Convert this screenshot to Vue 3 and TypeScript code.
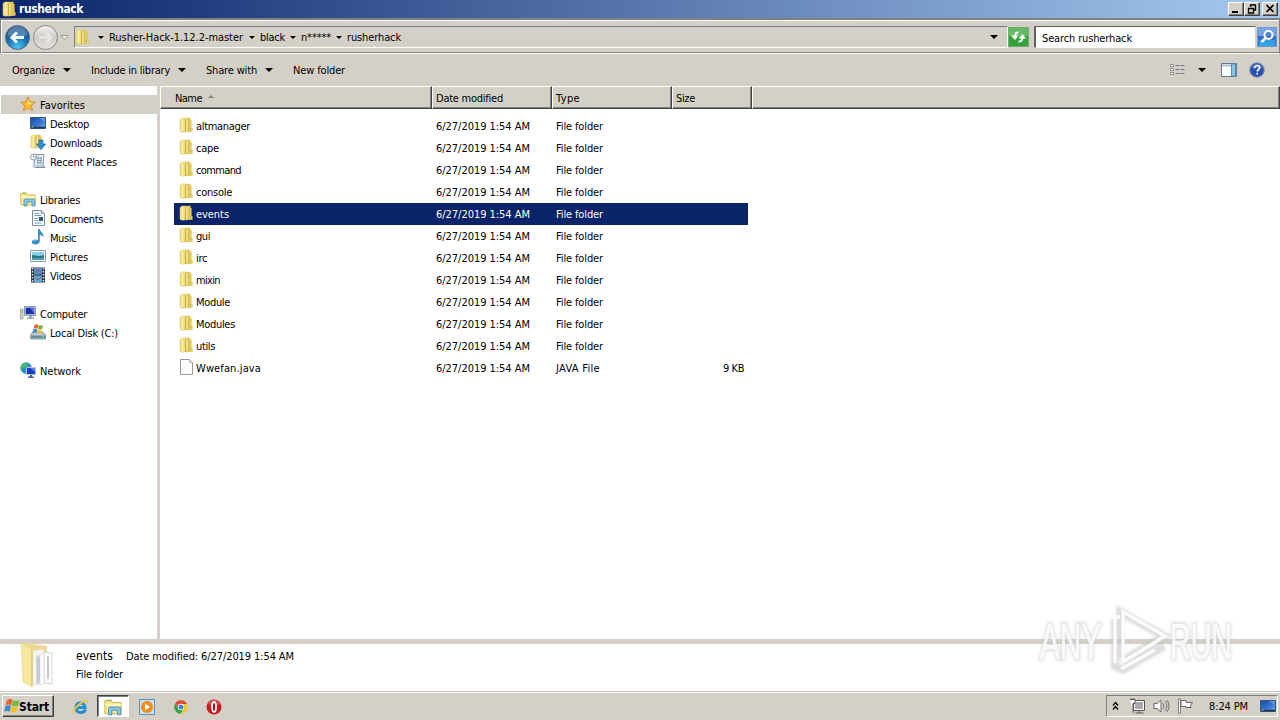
<script setup lang="ts">
interface Entry { name: string; w: number; type: string; typeW: number; size?: string; icon: string }
interface NavItem { label: string; w: number; icon: string; root?: boolean; gap?: boolean; active?: boolean }

const folder = (name: string, w: number): Entry => ({ name, w, type: 'File folder', typeW: 47, icon: 'folder' })
const files: Entry[] = [
  folder('altmanager', 54), folder('cape', 23), folder('command', 45), folder('console', 36),
  folder('events', 33), folder('gui', 14), folder('irc', 11), folder('mixin', 24),
  folder('Module', 34), folder('Modules', 39), folder('utils', 19),
  { name: 'Wwefan.java', w: 65, type: 'JAVA File', typeW: 44, size: '9 KB', icon: 'file' },
]
const nav: NavItem[] = [
  { label: 'Favorites', w: 45, icon: 'star', root: true, active: true },
  { label: 'Desktop', w: 39, icon: 'desktop' },
  { label: 'Downloads', w: 52, icon: 'downloads' },
  { label: 'Recent Places', w: 67, icon: 'recent' },
  { label: 'Libraries', w: 40, icon: 'library', root: true, gap: true },
  { label: 'Documents', w: 53, icon: 'document' },
  { label: 'Music', w: 26, icon: 'music' },
  { label: 'Pictures', w: 38, icon: 'picture' },
  { label: 'Videos', w: 31, icon: 'video' },
  { label: 'Computer', w: 47, icon: 'computer', root: true, gap: true },
  { label: 'Local Disk (C:)', w: 68, icon: 'disk' },
  { label: 'Network', w: 41, icon: 'network', root: true, gap: true },
]
const crumbs = [
  { label: 'Rusher-Hack-1.12.2-master', w: 134 },
  { label: 'black', w: 25 },
  { label: 'n*****', w: 30 },
  { label: 'rusherhack', w: 54 },
]
const menu = [
  { label: 'Organize', w: 43, arrow: true },
  { label: 'Include in library', w: 79, arrow: true },
  { label: 'Share with', w: 51, arrow: true },
  { label: 'New folder', w: 52, arrow: false },
]

// Spreads letters so that a label takes its given width.
const vFit = {
  mounted(el: HTMLElement, b: { value: number }) {
    const natural = el.getBoundingClientRect().width
    const n = (el.textContent ?? '').length
    if (n > 0) el.style.letterSpacing = `${(b.value - natural) / n}px`
  },
}
</script>

<template>
  <svg class="defs" width="0" height="0">
    <defs>
      <linearGradient id="gold" x1="0" x2="1" y1="0" y2="0"><stop offset="0" stop-color="#f3e08c" /><stop offset=".5" stop-color="#d9b94c" /><stop offset="1" stop-color="#efd75e" /></linearGradient>
      <linearGradient id="screen" x1="0" x2="1" y1="0" y2="1"><stop offset="0" stop-color="#164aa8" /><stop offset=".6" stop-color="#3978d4" /><stop offset="1" stop-color="#72bce8" /></linearGradient>
      <radialGradient id="orb" cx=".5" cy=".9" r=".8"><stop offset="0" stop-color="#46c5ef" /><stop offset=".55" stop-color="#1c72b0" /><stop offset="1" stop-color="#194a80" /></radialGradient>
      <linearGradient id="glass" x1="0" x2="0" y1="0" y2="1"><stop offset="0" stop-color="#f3f2f0" /><stop offset=".5" stop-color="#cfcdca" /><stop offset="1" stop-color="#e4e2df" /></linearGradient>
      <symbol id="folder" viewBox="0 0 16 16"><path d="M2 2.500 4 1h4v13.500l-3 .8-3-.8z" fill="#efdc7a" stroke="#dcc566" stroke-width=".5" /><path d="M4.500 1.500v13" stroke="#faf0ae" stroke-width="1.600" /><path d="M7 2 8.500.8h4v13.700L9 15.300H7z" fill="url(#gold)" /><path d="M7.500 2v13" stroke="#c9a848" stroke-width=".9" /><path d="M9 2v12.500" stroke="#fbf2b4" /><path d="M12.300 3h1v7.500l1 1v3H11z" fill="#ecd465" stroke="#d4b54d" stroke-width=".5" /><path d="M12.700 11v2" stroke="#a8b07a" stroke-width=".9" /></symbol>
      <symbol id="file" viewBox="0 0 16 16"><path d="M2.500.5h9l3 3v12h-12z" fill="#fcfcfc" stroke="#9a9a9a" /><path d="M11.500.5v3h3" fill="#e6e6e6" stroke="#aaa" stroke-width=".8" /></symbol>
      <symbol id="star" viewBox="0 0 16 16"><path d="m8 .8 2 5 5.300.4-4.100 3.400 1.400 5.300L8 12l-4.600 2.900 1.400-5.300L.7 6.200 6 5.800z" fill="#fbc02c" stroke="#dd7e2b" stroke-width=".8" /><path d="m8 3 1.300 3.700 3.800.4L8 8.500z" fill="#fff08c" /></symbol>
      <symbol id="desktop" viewBox="0 0 16 16"><path d="M.5 2.500h15v11H.5z" fill="url(#screen)" stroke="#355783" /><path d="M1 12.500h14" stroke="#203653" stroke-width="1.500" /><path d="M1.500 12h2" stroke="#7ce17b" /><path d="M9 3h6v4z" fill="#599be0" /></symbol>
      <symbol id="downloads" viewBox="0 0 16 16"><use href="#folder" x="-1" y="0" width="15" height="15" /><path d="M9 6h4v4h2.700L11 15.700 6.500 10H9z" fill="#328ccc" stroke="#246b9e" stroke-width=".7" /></symbol>
      <symbol id="recent" viewBox="0 0 16 16"><path d="M5 1.500h9l-1 10 2 3H6c-2 0-3-1-2-3z" fill="#e2ebf1" stroke="#7b929f" /><circle cx="3.500" cy="4" r="3" fill="#f7fafc" stroke="#8e9ba6" /><path d="M3.500 2v2h2M7 5h5M7 7.500h5M7 10h4M8 4v7M11 4v7M6 13h7" stroke="#6a8595" fill="none" stroke-width=".7" /></symbol>
      <symbol id="library" viewBox="0 0 16 16"><path d="M.7 2.500h6l1 1.500h7.500v10H.7z" fill="#f9e78c" stroke="#d5ae3d" stroke-width=".8" /><path d="M2 2h5" stroke="#86c54f" /><path d="M1 6h14" stroke="#fff7bf" stroke-width="2" /><path d="M4 15V9.500q0-1.500 1.500-1.500H13q2 0 2 1.500V15h-3v-4H7v4z" fill="#84c8e9" stroke="#3c88b4" stroke-width=".7" /></symbol>
      <symbol id="document" viewBox="0 0 16 16"><path d="M2.500.5h9l3 3v12h-12z" fill="#f8fbfe" stroke="#7b8c9b" /><path d="M11 .5v3h3.500" fill="#ccd9e6" stroke="#7b8c9b" stroke-width=".7" /><path d="M4.500 3.500H9m-4.500 2h7m-7 3H8m-3.500 2H8m-3.500 2.500h7" stroke="#6792bd" stroke-width=".9" /><path d="M9 7h4v4H9z" fill="#33557c" /></symbol>
      <symbol id="music" viewBox="0 0 16 16"><path d="M8 0h1.800c.2 3 4.500 3.500 3.500 8.500C12.500 6.500 11 6 9.800 5.700V12c0 2-1.800 3.500-4.500 3.500-4.500 0-4.500-5 0-5 1.200 0 2 .2 2.700.6z" fill="#358ed0" /><path d="M3.500 12c.5-.7 1.500-1 2.500-.8" stroke="#a5dbf5" fill="none" /></symbol>
      <symbol id="picture" viewBox="0 0 16 16"><path d="M.5 2.500h15v11H.5z" fill="#fff" stroke="#869bac" /><path d="M2 4h12v8H2z" fill="#86cfed" /><path d="M2 7c5 0 6 2 12 0v5H2z" fill="#2f7778" /><path d="M2 10c4-1 8 1 12-.5V12H2z" fill="#4aa0b5" /></symbol>
      <symbol id="video" viewBox="0 0 16 16"><path d="M1 .5h14v15H1z" fill="#2c3540" /><path d="M4 1h8v6.500H4z" fill="#4c94cc" /><path d="M4 8.500h8V15H4z" fill="#5aaad9" /><path d="m5 6 3-4 3 4M6 10l2 3 3-3" stroke="#b9504a" fill="none" /><path d="M2.500 1v14M13.500 1v14" stroke="#e5e9ed" stroke-width="1.500" stroke-dasharray="1.500 1.500" /></symbol>
      <symbol id="computer" viewBox="0 0 16 16"><path d="M.5 4h2.500v10H.5z" fill="#d5ddd2" stroke="#849383" stroke-width=".7" /><path d="M1 7h1.500" stroke="#55ad45" /><path d="M4.500 1.500h11v9h-11z" fill="#cdd5de" stroke="#8799ad" /><path d="M5.700 2.700h8.600v6.500H5.700z" fill="#1b2fb1" /><path d="M10 3h4v5z" fill="#546fe0" /><path d="M9 11h3v1.500h2V14H7v-1.500h2z" fill="#9ba9b6" /></symbol>
      <symbol id="disk" viewBox="0 0 16 16"><path d="m.7 11 2-3h10l2.800 3v4H.7z" fill="#bdc8cf" stroke="#697d89" stroke-width=".8" /><path d="M1.500 11.500h13.500V14H1.500z" fill="#5f91a5" /><path d="M12 12.800h2" stroke="#73e45a" /><use href="#winflag" x="2.500" y="-.5" width="11" height="11" /></symbol>
      <symbol id="network" viewBox="0 0 16 16"><circle cx="6" cy="6" r="5.700" fill="#278cca" /><path d="M2 2c4-2 6-1 6 1L6 5 3 6 1 9C0 6 1 3 2 2M5 8l3-1v4H6z" fill="#4eb764" /><path d="M6.500 5.500h9v7h-9z" fill="#203bc6" stroke="#b7c5d8" /><path d="M10 6h5v4z" fill="#577be9" /><path d="M10 13h2v1.500h2V16H8v-1.500h2z" fill="#496392" /></symbol>
      <symbol id="winflag" viewBox="0 0 16 16"><path d="M3 2q3-2 5.500-.3L7.300 7.300Q4.500 5.500 1.600 7.300z" fill="#e86131" /><path d="M9 2.200q3 1.500 6.500 0L14 7.700q-3 1.200-6.200 0z" fill="#75b83e" /><path d="M1.300 8q3-1.500 5.700 0l-1.300 5.700q-2.500-1.500-5.500 0z" fill="#4389d2" /><path d="M7.500 8.300q3 1.400 6.200 0L12.300 13.900q-2.800 1.300-6 0z" fill="#f4be2b" /></symbol>
      <filter id="soft" x="-20%" y="-20%" width="140%" height="140%"><feGaussianBlur stdDeviation="1.600" /></filter>
    </defs>
  </svg>

  <div class="desktop">
    <header class="title">
      <svg class="ico"><use href="#folder" /></svg>
      <b v-fit="64">rusherhack</b>
      <div class="winbtns">
        <i><svg width="14" height="12"><path d="M3 9h6" stroke="#000" stroke-width="2" /></svg></i>
        <i><svg width="14" height="12"><path d="M5 2h6M5.500 2v2M10.500 2v5H9M3 5.500h6M3.500 5v5h5V5" stroke="#000" fill="none" stroke-width="1.300" /></svg></i>
        <i class="close"><svg width="14" height="12"><path d="m3.500 2 7 7m0-7-7 7" stroke="#000" stroke-width="1.700" /></svg></i>
      </div>
    </header>

    <div class="address">
      <svg class="navorbs" width="72" height="30" viewBox="0 0 72 30">
        <circle cx="17.500" cy="15.500" r="12" fill="url(#orb)" stroke="#506d88" />
        <path d="M7.500 13a10 9 0 0 1 20 0q-10 4-20 0" fill="#a4c7df" opacity=".4" />
        <path d="M24 15.500H12m5-5-5.200 5 5.200 5" fill="none" stroke="#fff" stroke-width="2.800" />
        <circle cx="45.500" cy="15.500" r="12" fill="url(#glass)" stroke="#8c8b89" />
        <path d="M39 15.500h12m-5-5 5.200 5-5.200 5" fill="none" stroke="#e9e7e3" stroke-width="2.500" />
        <path d="M61 13.500h7l-3.500 4z" fill="#f6f5f2" stroke="#8c8983" stroke-width=".8" />
      </svg>
      <div class="path">
        <svg class="ico"><use href="#folder" /></svg>
        <div class="crumbs">
          <div v-for="c in crumbs" :key="c.label" class="crumb"><i class="tri small" /><span v-fit="c.w">{{ c.label }}</span></div>
        </div>
        <i class="tri drop" />
      </div>
      <svg class="refresh" width="21" height="20"><path d="M.5.500h20v19H.5z" fill="#35a23b" stroke="#72a872" /><path d="M1 1h19v8H1z" fill="#66ba66" /><path d="M10.500 5.500Q7 5 7 10" fill="none" stroke="#fff" stroke-width="2" /><path d="M3 8.500h7.500L7 13z" fill="#fff" /><path d="M10.500 14.500Q14.500 15 14.500 10" fill="none" stroke="#fff" stroke-width="2" /><path d="M10.500 11.500H18L14.500 7z" fill="#fff" /></svg>
      <div class="search"><span v-fit="90">Search rusherhack</span></div>
      <svg class="searchbtn" width="20" height="20"><path d="M.5.500h19v19H.5z" fill="#2d70cf" stroke="#6e9bd5" /><path d="M1 1h18v8H1z" fill="#76a5e3" /><path d="M2 13h16v6H2z" fill="#32a0e3" /><circle cx="11.500" cy="8" r="4" fill="#4a82cf" stroke="#fff" stroke-width="2" /><path d="m8.500 11-4 4" stroke="#fff" stroke-width="2.500" /></svg>
    </div>

    <div class="toolbar">
      <div v-for="m in menu" :key="m.label" class="menu"><span v-fit="m.w">{{ m.label }}</span><i v-if="m.arrow" class="tri" /></div>
      <div class="tools">
        <svg width="16" height="14"><path d="M.5 1.500h3v2h-3zm0 4h3v2h-3zm0 4h3v2h-3z" fill="#fff" stroke="#777" stroke-width=".8" /><path d="M5.500 2.500h4m1 0h4m-9 4h4m1 0h4m-9 4h4m1 0h4" stroke="#778" /></svg>
        <i class="tri view" />
        <svg class="pane" width="16" height="14"><path d="M.5.500h15v13H.5z" fill="#fff" stroke="#5d7b99" /><path d="M1 2.500h14" stroke="#a9bfd1" stroke-width="2" /><path d="M10.500 1v12h4V1z" fill="#88c7e4" stroke="#568caf" /></svg>
        <svg class="help" width="16" height="16"><circle cx="8" cy="8" r="7.300" fill="#2b50b2" stroke="#8b98b5" /><path d="M2.500 6a5.700 5 0 0 1 11 0z" fill="#849de0" opacity=".5" /><path d="M5.700 6.200c0-3.700 5-3.200 5-.4C10.700 7.500 8.200 7.500 8.200 9.500m0 1.200v1.800" stroke="#fff" stroke-width="1.600" fill="none" /></svg>
      </div>
    </div>

    <main class="body">
      <nav class="side">
        <div v-for="n in nav" :key="n.label" class="nav" :class="{ root: n.root, gap: n.gap, active: n.active }">
          <svg class="ico"><use :href="'#' + n.icon" /></svg><span v-fit="n.w">{{ n.label }}</span>
        </div>
      </nav>
      <section class="list">
        <div class="head">
          <div class="name"><span v-fit="27">Name</span><i class="sort" /></div>
          <div><span v-fit="67">Date modified</span></div>
          <div><span v-fit="24">Type</span></div>
          <div class="sz"><span v-fit="19">Size</span></div>
          <div class="rest" />
        </div>
        <div class="rows">
          <div v-for="f in files" :key="f.name" class="row" :class="{ selected: f.name === 'events' }">
            <div class="cell first"><svg class="ico"><use :href="'#' + f.icon" /></svg><span v-fit="f.w">{{ f.name }}</span></div>
            <div class="cell"><span v-fit="94">6/27/2019 1:54 AM</span></div>
            <div class="cell"><span v-fit="f.typeW">{{ f.type }}</span></div>
            <div class="cell size"><span v-if="f.size" v-fit="21">{{ f.size }}</span></div>
          </div>
        </div>
      </section>
    </main>

    <footer class="details">
      <svg class="big" width="36" height="46" viewBox="0 0 36 46">
        <path d="M3 0 27 3v34L8 42z" fill="#edd88d" />
        <path d="m12 8 12-2v34l-12 3z" fill="#f4f4f4" stroke="#ddd" stroke-width=".6" />
        <path d="m16 13 8-2v27l-8 4z" fill="#d5d9de" />
        <path d="m24 9 8 1v31l-8-1z" fill="#fdfdfd" stroke="#ccc" stroke-width=".8" />
        <path d="m17 15 3-1v25l-3 1zm10-2 2 .3v23l-2-.3z" fill="#c3c9d3" />
        <path d="m20 12 4-2v30l-4 3z" fill="#fff" stroke="#d5d5d5" stroke-width=".6" />
        <path d="m1 0 11 7v37L3 39z" fill="#f9e79f" stroke="#ead88c" stroke-width=".7" />
        <path d="m11 7 2 1v34l-2 2z" fill="#e3cb7c" />
      </svg>
      <div class="info">
        <div class="line"><span v-fit="37" class="large">events</span><span v-fit="168" class="date">Date modified: 6/27/2019 1:54 AM</span></div>
        <div class="line two"><span v-fit="47">File folder</span></div>
      </div>
    </footer>

    <div class="taskbar">
      <div class="start"><svg class="ico"><use href="#winflag" /></svg><b v-fit="30">Start</b></div>
      <div class="task"><svg width="18" height="18" viewBox="0 0 18 18"><path d="M14.500 11.500c-1.500 4-9.500 4.500-9.500-2S14 4 14 9.500H6" fill="none" stroke="#238fd0" stroke-width="3" /><path d="M2 16c-4-2 7-14 13-14 3 0 2 3 1 4 0-4-4-2-8 2-4 3-6 7-6 8" fill="#edc63d" /></svg></div>
      <div class="task pressed"><svg width="18" height="18"><use href="#library" /></svg></div>
      <div class="task"><svg width="16" height="16"><path d="M.5.500h15v15H.5z" fill="#c7e0f2" stroke="#5a91bd" /><circle cx="8" cy="8" r="6" fill="#f28a1c" /><path d="m6 4.500 5 3.500-5 3.500z" fill="#fff" /></svg></div>
      <div class="task"><svg width="14" height="14" viewBox="0 0 14 14"><circle cx="7" cy="7" r="6.700" fill="#f3c72f" /><path d="M1.200 3.500A6.700 6.700 0 0 1 13 4H7L4.500 8z" fill="#df4939" /><path d="M1.200 3.500A6.700 6.700 0 0 0 6.500 13.700L9.500 9 5 9z" fill="#36a152" /><circle cx="7" cy="7" r="3.200" fill="#fff" /><circle cx="7" cy="7" r="2.500" fill="#4781dd" /></svg></div>
      <div class="task opera"><svg width="16" height="16"><circle cx="8" cy="8" r="7.500" fill="#c51c26" /><path d="M2 5a6.500 6.500 0 0 1 12 0q-6 3-12 0" fill="#df6a6c" opacity=".6" /><ellipse cx="8" cy="8" rx="2" ry="5" fill="#981119" stroke="#fff" stroke-width="1.800" /></svg></div>
      <div class="tray">
        <svg width="9" height="10"><path d="m2 4.500 2.500-3L7 4.500m-5 4 2.500-3L7 8.500" fill="none" stroke="#000" stroke-width="1.400" /></svg>
        <svg class="net" width="16" height="16"><path d="M5.500 3.500h9v8h-9z" fill="#aaa" stroke="#fff" stroke-width="3" /><path d="M4.500 2.500h11v10h-11zM6.500 15h8M10 12.500V15" fill="none" stroke="#555" /><path d="M6 4h8v7H6z" fill="#aaa" /><path d="M1 1.500h5v4H4V15M2 0v2M5 0v2" fill="#fff" stroke="#555" /></svg>
        <svg class="vol" width="17" height="16"><path d="M1 5.500h3L8 2v12l-4-3.500H1z" fill="#fff" stroke="#666" /><path d="M10 5q2 3 0 6m2-8q4 5 0 10m2-11q4 6 0 12" fill="none" stroke="#777" /></svg>
        <svg class="flag" width="17" height="16"><path d="M1.500 1h2v14h-2z" fill="#fff" stroke="#666" stroke-width=".8" /><path d="M4 2.500h5v2h6.500l-2 3 .5 2H9v-1H4z" fill="#fff" stroke="#666" /></svg>
        <span v-fit="39" class="clock">8:24 PM</span>
        <svg class="show" width="16" height="16"><use href="#desktop" /></svg>
      </div>
    </div>

    <svg class="mark" width="220" height="100" viewBox="0 -10 220 100">
      <g class="shade" filter="url(#soft)">
        <path d="M84 19v47l8 4 41-24M89 59V12l44 24-42 25" />
        <text class="word" x="9" y="59" textLength="61" lengthAdjust="spacingAndGlyphs">ANY</text>
        <text class="word" x="139" y="59" textLength="62" lengthAdjust="spacingAndGlyphs">RUN</text>
      </g>
      <g class="light">
        <path d="M89 17h-5v46M92 60V12l42 24-42 26M90 69l34-19" />
        <text class="word" x="9" y="59" textLength="61" lengthAdjust="spacingAndGlyphs">ANY</text>
        <text class="word" x="139" y="59" textLength="62" lengthAdjust="spacingAndGlyphs">RUN</text>
      </g>
    </svg>
  </div>
</template>

<style>
html, body { margin: 0; overflow: hidden; }
</style>
<style scoped>
.defs { position: absolute; }
.desktop { position: relative; width: 1280px; height: 720px; display: flex; flex-direction: column; background: #d4d0c8; color: #000; font: 11px/14px Tahoma, "DejaVu Sans Condensed", "Noto Sans", sans-serif; overflow: hidden; }
.desktop * { box-sizing: border-box; }
span, b { white-space: pre; flex: none; display: inline-block; }
span { padding-top: 2px; }
svg { display: block; flex: none; }
.ico { width: 16px; height: 16px; }
.tri { flex: none; width: 0; height: 0; border: 4px solid transparent; border-top-color: #000; border-bottom: 0; }
.tri.small { border-width: 3px 3px 0; }
.title { height: 18px; flex: none; display: flex; align-items: center; padding-left: 1px; background: linear-gradient(90deg, #0a246a, #a6caf0); color: #fff; }
.title b { margin-left: 2px; font-size: 12px; }
.winbtns { margin-left: auto; display: flex; padding-right: 2px; }
.winbtns i { width: 16px; height: 14px; background: #d4d0c8; border: 1px solid; border-color: #fff #404040 #404040 #fff; box-shadow: inset -1px -1px #808080; }
.winbtns .close { margin-left: 2px; }
.address { height: 36px; flex: none; display: flex; padding: 3px 2px 0 0; border: solid; border-width: 2px 1px 1px; border-color: #808080 #808080 #fff #808080; box-shadow: inset 0 1px #fff, inset 1px 0 #fff, inset 0 -1px #808080; }
.navorbs { margin-left: -1px; margin-top: -1px; }
.path { width: 934px; height: 22px; margin: 3px 0 0 2px; display: flex; align-items: center; border: 1px solid #808080; border-color: #717d86 #fff #fff #808080; }
.path .ico { margin-top: -1px; margin-left: -1px; }
.crumbs { display: flex; margin-left: 8px; }
.crumb { display: flex; align-items: center; margin-right: 6px; }
.crumb + .crumb { margin-right: 5px; }
.crumb .tri { margin-right: 5px; }
.drop { margin-left: auto; margin-right: 9px; }
.refresh { margin: 4px 0 0 0; }
.search { width: 222px; height: 22px; margin: 3px 0 0 5px; padding: 3px 6px; background: #fff; border: solid #808080; border-width: 1px 1px 1px 2px; border-color: #606060 #d4d0c8 #fff #606060; }
.searchbtn { margin: 4px 0 0 1px; }
.toolbar { height: 31px; flex: none; display: flex; align-items: center; padding-left: 12px; }
.menu { display: flex; align-items: center; margin-right: 20px; }
.menu .tri { margin-left: 8px; }
.tools { margin-left: auto; display: flex; align-items: center; padding-right: 15px; }
.view { margin: 0 15px 0 12px; }
.help { margin-left: 12px; }
.body { height: 554px; flex: none; display: flex; border-top: 1px solid #d4d0c8; }
.side { width: 157px; background: #fff; padding-top: 9px; }
.nav { height: 19px; display: flex; align-items: center; padding-left: 30px; }
.nav .ico { margin-top: -1px; }
.nav span { margin-left: 4px; }
.nav.root { padding-left: 20px; }
.nav.gap { margin-top: 19px; }
.nav.active { background: #d4d0c8; margin-left: 1px; padding-left: 19px; }
.list { flex: 1; margin-left: 3px; background: #fff; }
.head { height: 23px; display: flex; background: #d4d0c8; }
.head > div { width: 120px; display: flex; align-items: center; padding: 1px 0 0 3px; border: 1px solid; border-color: #fff #404040 #404040 #fff; box-shadow: inset -1px -1px #808080; }
.head .name { width: 272px; padding-left: 14px; }
.head .sz { width: 80px; }
.head .rest { flex: 1; width: auto; }
.sort { margin: -4px 0 0 6px; border: 3px solid transparent; border-bottom-color: #85827c; border-top: 0; }
.rows { padding: 6px 0 0 14px; }
.row { width: 574px; height: 22px; display: flex; }
.cell { width: 120px; display: flex; align-items: center; padding-left: 2px; }
.cell.first { width: 260px; padding-left: 4px; }
.cell.first .ico { margin-top: -2px; }
.cell.first span { margin-left: 2px; }
.cell.size { width: 74px; justify-content: flex-end; padding-right: 4px; }
.selected { background: #0a246a; color: #fff; }
.details { height: 53px; flex: none; display: flex; border-top: 5px solid #d4d0c8; background: #fff; border-bottom: 1px solid #c9c5bd; }
.big { margin: -1px 0 0 20px; }
.info { margin: 4px 0 0 20px; }
.line { display: flex; align-items: center; height: 16px; }
.two { margin-top: 2px; }
.large { font-size: 12px; padding-top: 0; }
.date { margin-left: 13px; }
.taskbar { flex: 1; display: flex; border-top: 1px solid #fff; padding-top: 2px; }
.start { width: 52px; height: 22px; margin-left: 2px; display: flex; align-items: center; padding-left: 1px; border: 1px solid; border-color: #fff #404040 #404040 #fff; box-shadow: inset -1px -1px #808080; }
.start b { font-size: 12px; padding-top: 2px; margin-left: -1px; }
.task { width: 32px; height: 22px; display: flex; align-items: center; justify-content: center; margin-right: 2px; padding-top: 1px; }
.start + .task { margin-left: 10px; margin-right: 1px; }
.task.pressed { background: #fff; border: 1px solid; border-color: #404040 #fff #fff #404040; box-shadow: inset 1px 1px #808080; }
.task.opera { margin-left: -1px; }
.tray { width: 172px; height: 22px; margin: 0 2px 0 auto; display: flex; align-items: center; padding-left: 4px; border: 1px solid; border-color: #808080 #fff #fff #808080; }
.net { margin-left: 9px; }
.vol { margin-left: 8px; }
.flag { margin-left: 7px; }
.clock { margin-left: 15px; }
.show { margin-left: 12px; }
.mark { position: absolute; left: 1031px; top: 590px; overflow: visible; }
.word { font: 400 50px/60px "Liberation Sans", Arial, sans-serif; }
.shade path { fill: none; stroke: #c4c4c4; stroke-width: 8px; stroke-opacity: .6; }
.shade .word { fill: #c4c4c4; stroke: #c4c4c4; stroke-width: 4px; opacity: .55; }
.light path { fill: none; stroke: #fff; stroke-width: 3.500px; stroke-opacity: .9; }
.light .word { fill: #fff; stroke: #fff; stroke-width: .6px; opacity: .85; }
</style>
